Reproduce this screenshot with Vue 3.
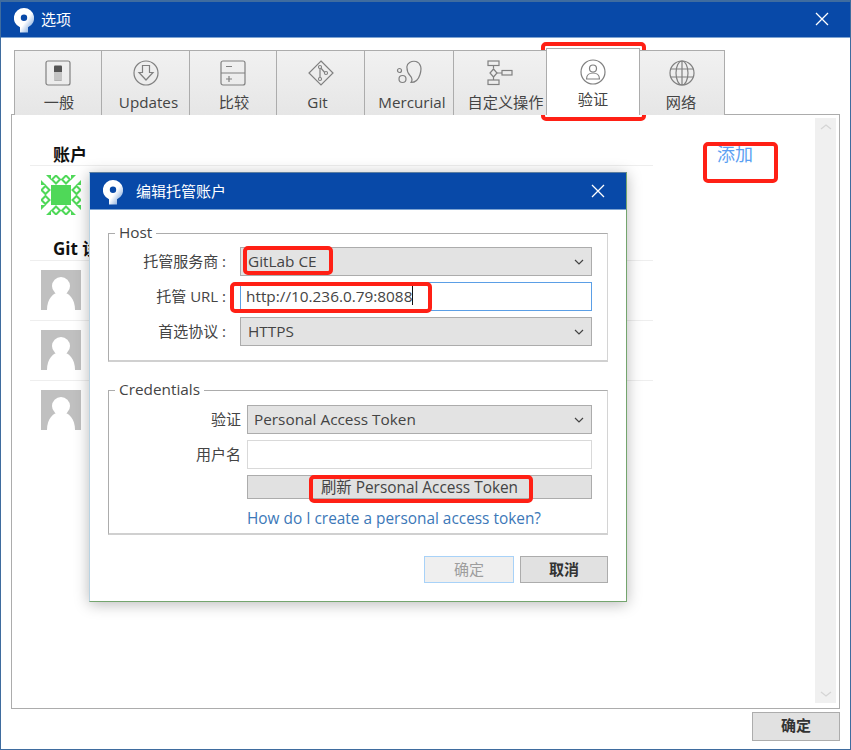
<script setup>
const tabs = [
  { label: '一般', icon: 'general', w: 88, dx: 2 },
  { label: 'Updates', icon: 'updates', w: 89, dx: 6 },
  { label: '比较', icon: 'diff', w: 88, dx: 2 },
  { label: 'Git', icon: 'git', w: 89, dx: -6 },
  { label: 'Mercurial', icon: 'hg', w: 90, dx: 6 },
  { label: '自定义操作', icon: 'custom', w: 94, dx: 11 },
  { label: '验证', icon: 'auth', w: 94, active: true, dx: 0 },
  { label: '网络', icon: 'net', w: 86, dx: -2 }
]
const avatars = [1, 2, 3]
const diamonds = [[15,4.5],[25,4.5],[15,35.5],[25,35.5],[4.5,15],[4.5,25],[35.5,15],[35.5,25]]
const corners = ['', 'translate(40 0) scale(-1 1)', 'translate(0 40) scale(1 -1)', 'translate(40 40) scale(-1 -1)']
</script>

<template>
  <div class="win">
    <header class="title">
      <svg class="logo" viewBox="0 0 20 26" width="20" height="26">
        <defs><linearGradient id="lg" x1="0.2" y1="0.2" x2="0.9" y2="0.8"><stop offset="0.55" stop-color="#fff"/><stop offset="1" stop-color="#8fb2e0"/></linearGradient></defs>
        <path fill="url(#lg)" fill-rule="evenodd" d="M10 0a10 10 0 0 1 4 19.2V24.500H6V19.200A10 10 0 0 1 10 0zm0 6.500a3.200 3.200 0 1 0 0 6.400 3.200 3.200 0 0 0 0-6.400z"/>
      </svg>
      <span class="title-text">选项</span>
      <svg class="close" viewBox="0 0 14 14" width="14" height="14"><path d="M1 1l12 12M13 1L1 13" stroke="#fff" stroke-width="1.3" fill="none"/></svg>
    </header>

    <div class="body">
      <nav class="tabs">
        <div v-for="t in tabs" :key="t.label" class="tab" :class="{ active: t.active }" :style="{ width: t.w + 'px' }">
          <svg class="tab-icon" viewBox="0 0 26 26" width="26" height="26" fill="none" stroke="#808080" stroke-width="1.2">
            <template v-if="t.icon === 'general'">
              <rect x="1" y="1" width="24" height="24" rx="2"/>
              <rect x="9" y="5.500" width="8" height="15" rx="1" fill="#555" stroke="none"/>
              <rect x="9" y="12" width="8" height="8.500" fill="#c4c4c4" stroke="none"/>
            </template>
            <template v-else-if="t.icon === 'updates'">
              <circle cx="13" cy="13" r="12"/>
              <path d="M9.500 5.500h7v7H20l-7 7.500-7-7.500h3.500z"/>
            </template>
            <template v-else-if="t.icon === 'diff'">
              <rect x="1" y="1" width="24" height="24" rx="2"/>
              <path d="M1 13h24M6 6.500h6M6 19h6M9 16v6"/>
            </template>
            <template v-else-if="t.icon === 'git'">
              <path d="M13 1l12 12-12 12L1 13z"/>
              <path d="M12 6v14M12 7l6 7"/>
              <circle cx="12" cy="7" r="1.500" fill="#fff"/><circle cx="18" cy="13" r="1.500" fill="#fff"/><circle cx="12" cy="19" r="1.500" fill="#fff"/>
            </template>
            <template v-else-if="t.icon === 'hg'">
              <path d="M11 8C10 3 16 .5 20 1.500c5 1.500 6 7 4 13-1.500 5-5 8-9 8 2-3 1-5-1-7-1.500-1.500-3-4-3-7.500z"/>
              <circle cx="3.500" cy="10.500" r="2"/><circle cx="6.500" cy="19" r="3.500"/>
            </template>
            <template v-else-if="t.icon === 'custom'">
              <rect x="1" y="1" width="11" height="4.500"/><rect x="1" y="20" width="11" height="4.500"/><rect x="15" y="10.500" width="10" height="4.500"/>
              <path d="M6.500 5.500v3M6.500 17v3M10 13h5"/><path d="M6.500 9l3.500 4-3.500 4L3 13z"/>
            </template>
            <template v-else-if="t.icon === 'auth'">
              <circle cx="13" cy="13" r="12"/><circle cx="13" cy="9.500" r="3.500"/>
              <path d="M6.500 20c0-4 3-6 6.500-6s6.500 2 6.500 6z"/>
            </template>
            <template v-else>
              <circle cx="13" cy="13" r="12"/><ellipse cx="13" cy="13" rx="6" ry="12"/>
              <path d="M1.500 9h23M1.500 17h23M13 1v24"/>
            </template>
          </svg>
          <span class="tab-label" :style="{ marginLeft: t.dx + 'px' }">{{ t.label }}</span>
        </div>
      </nav>

      <section class="panel">
        <div class="list">
          <div class="list-head">
            <h3 class="heading">账户</h3>
            <a class="add">添加</a>
          </div>
          <div class="sep"></div>
          <div class="row first">
            <svg viewBox="0 0 40 40" width="40" height="40" class="ava">
              <rect x="10" y="10" width="20" height="20" fill="#4fd858"/>
              <path v-for="d in diamonds" :key="d.join()" :d="`M${d[0]} ${d[1]-4}l4 4-4 4-4-4z`" fill="none" stroke="#4fd858" stroke-width="2"/>
              <path v-for="c in corners" :key="c" :transform="c" fill="#4fd858" d="M5 0h5v5zM0 5v5h5z"/>
            </svg>
          </div>
          <h3 class="heading git">Git 设置</h3>
          <div class="sep"></div>
          <div v-for="a in avatars" :key="a" class="row user">
            <svg viewBox="0 0 40 40" width="40" height="40" class="ava">
              <rect width="40" height="40" fill="#c0c0c0"/>
              <circle cx="20" cy="16" r="9" fill="#fff"/>
              <path fill="#fff" d="M6 40c0-11 6-18 14-18s14 7 14 18z"/>
            </svg>
          </div>
        </div>
        <div class="scroll">
          <svg viewBox="0 0 12 8" width="12" height="8"><path d="M1 6l5-4 5 4" fill="none" stroke="#d5d5d5" stroke-width="1.300"/></svg>
          <svg viewBox="0 0 12 8" width="12" height="8"><path d="M1 2l5 4 5-4" fill="none" stroke="#d5d5d5" stroke-width="1.300"/></svg>
        </div>
      </section>

      <footer class="foot"><button class="btn ok-main">确定</button></footer>
    </div>

    <div class="dialog">
      <header class="dlg-title">
        <svg class="logo" viewBox="0 0 20 26" width="20" height="26">
          <path fill="url(#lg)" fill-rule="evenodd" d="M10 0a10 10 0 0 1 4 19.2V24.500H6V19.200A10 10 0 0 1 10 0zm0 6.500a3.200 3.200 0 1 0 0 6.400 3.200 3.200 0 0 0 0-6.400z"/>
        </svg>
        <span class="title-text">编辑托管账户</span>
        <svg class="close" viewBox="0 0 14 14" width="14" height="14"><path d="M1 1l12 12M13 1L1 13" stroke="#fff" stroke-width="1.3" fill="none"/></svg>
      </header>
      <div class="dlg-body">
        <fieldset class="group host">
          <legend>Host</legend>
          <div class="frow"><label>托管服务商 :</label><div class="select">GitLab CE<svg class="chev" viewBox="0 0 10 6" width="10" height="6"><path d="M1 1l4 4 4-4" fill="none" stroke="#444" stroke-width="1.200"/></svg></div></div>
          <div class="frow"><label>托管 URL :</label><div class="input focus"><i class="tick"></i>http://10.236.0.79:8088<i class="caret"></i></div></div>
          <div class="frow"><label>首选协议 :</label><div class="select">HTTPS<svg class="chev" viewBox="0 0 10 6" width="10" height="6"><path d="M1 1l4 4 4-4" fill="none" stroke="#444" stroke-width="1.200"/></svg></div></div>
        </fieldset>
        <fieldset class="group cred">
          <legend>Credentials</legend>
          <div class="frow"><label>验证</label><div class="select">Personal Access Token<svg class="chev" viewBox="0 0 10 6" width="10" height="6"><path d="M1 1l4 4 4-4" fill="none" stroke="#444" stroke-width="1.200"/></svg></div></div>
          <div class="frow"><label>用户名</label><div class="input plain"></div></div>
          <div class="frow refresh-row"><label></label><div class="refresh">刷新 Personal Access Token</div></div>
          <div class="frow link-row"><label></label><a class="link">How do I create a personal access token?</a></div>
        </fieldset>
        <div class="dlg-actions">
          <button class="btn disabled">确定</button>
          <button class="btn cancel">取消</button>
        </div>
      </div>
    </div>

    <i class="mark" style="left:540px;top:40px;width:105px;height:79px"></i>
    <i class="mark" style="left:702px;top:140px;width:75px;height:41px"></i>
    <i class="mark" style="left:242px;top:244px;width:90px;height:29px"></i>
    <i class="mark" style="left:229px;top:280px;width:202px;height:31px"></i>
    <i class="mark" style="left:308px;top:473px;width:224px;height:28px"></i>
  </div>
</template>

<style>
html, body { margin: 0; background: #fff; }
</style>

<style scoped>
.win {
  position: relative;
  width: 851px;
  height: 750px;
  box-sizing: border-box;
  border: 1px solid #3f6c9f;
  border-top-width: 2px;
  background: #fff;
  overflow: hidden;
  font-family: "Open Sans", "Noto Sans CJK SC", sans-serif;
  font-size: 15.35px;
  color: #444;
  display: flex;
  flex-direction: column;
}
.title {
  height: 35px;
  background: #0849a8;
  border-bottom: 1px solid #7ea4d2;
  display: flex;
  align-items: center;
  padding-left: 13px;
  flex: none;
}
.logo { flex: none; margin-top: 3px; }
.title-text { color: #fff; margin-left: 7px; font-size: 15px; line-height: 20px; margin-top: -1px; }
.close { margin-left: auto; margin-right: 21px; margin-top: -1px; }
.body { flex: 1; display: flex; flex-direction: column; padding: 12px 10px 8px 10px; min-height: 0; }
.tabs { display: flex; padding-left: 3px; height: 64px; flex: none; position: relative; z-index: 1; }
.tab {
  box-sizing: border-box;
  height: 65px;
  border: 1px solid #acacac;
  border-bottom: none;
  margin-right: -1px;
  background: linear-gradient(#f1f1f1, #e6e6e6);
  display: flex;
  flex-direction: column;
  align-items: center;
  white-space: nowrap;
  padding-top: 9px;
  overflow: hidden;
}
.tab-icon { flex: none; }
.tab-label { margin-top: 6px; font-size: 15.2px; line-height: 20px; color: #444; }
.tab.active {
  background: #fff;
  height: 67px;
  margin-top: -2px;
  padding-top: 10px;
  z-index: 2;
  overflow: visible;
}
.tab.active .tab-label { margin-top: 4px; }
.panel {
  flex: 1;
  border: 1px solid #acacac;
  display: flex;
  padding: 3px 3px 5px 0;
  min-height: 0;
}
.list { flex: 1; padding: 24px 0 0 18px; }
.list-head { display: flex; padding-left: 23px; padding-right: 62px; justify-content: space-between; }
.heading { margin: 0; font-size: 17px; line-height: 25px; color: #111; font-weight: 700; }
.add { color: #5b9ff2; font-size: 18px; line-height: 25px; }
.git { padding-left: 23px; margin-top: 10px; margin-bottom: 1px; line-height: 25px; }
.sep { height: 1px; background: #eee; width: 623px; margin-top: -2px; }
.row { width: 623px; box-sizing: border-box; padding-left: 11px; }
.first { padding-top: 9px; height: 60px; }
.user { height: 60px; padding-top: 9px; border-bottom: 1px solid #eee; }
.user:last-child { border: none; }
.ava { display: block; }
.scroll {
  width: 21px;
  background: #f0f0f0;
  display: flex;
  flex-direction: column;
  justify-content: space-between;
  align-items: center;
  padding: 5px 0;
  box-sizing: border-box;
  flex: none;
}
.foot { display: flex; justify-content: flex-end; padding-top: 3px; flex: none; }
.btn {
  font-family: inherit;
  font-size: 15px;
  box-sizing: border-box;
  background: #e1e1e1;
  border: 1px solid #acacac;
  padding: 0 0 2px;
  color: #333;
}
.ok-main { width: 88px; height: 29px; font-weight: 700; color: #333; padding-bottom: 4px; }

.dialog {
  position: absolute;
  left: 88px;
  top: 170px;
  width: 538px;
  height: 430px;
  box-sizing: border-box;
  background: #fff;
  border: 1px solid #74a56e;
  border-top-color: #5c7ea0;
  border-left-color: #b9d3e2;
  box-shadow: 0 2px 14px rgba(0,0,0,.28);
  display: flex;
  flex-direction: column;
}
.dlg-title {
  flex: none;
  background: #0849a8;
  border-bottom: 1px solid #7ea4d2;
  display: flex;
  align-items: center;
  padding-left: 13px;
  box-sizing: border-box;
  height: 37px;
}
.dlg-title .title-text { margin-left: 13px; margin-top: 0; }
.dlg-title .close { margin-right: 21px; margin-top: 0; }
.dlg-body { padding: 12px 18px 0; flex: 1; display: flex; flex-direction: column; }
.group {
  margin: 0;
  padding: 0;
  border: 1px solid #acacac;
  border-right-color: #d4d4d4;
  border-bottom: 2px solid #d0d0d0;
  box-sizing: border-box;
  width: 500px;
}
.group legend { margin-left: 6px; padding: 0 4px 2px; line-height: 20px; color: #444; }
.host { height: 140px; padding-top: 3px; }
.cred { height: 156px; margin-top: 17px; padding-top: 4px; }
.frow { display: flex; align-items: center; height: 29px; margin-bottom: 6px; }
.frow label { text-align: right; white-space: nowrap; color: #444; font-size: 15px; padding-bottom: 2px; }
.host .frow label { width: 117px; margin-right: 14px; }
.cred .frow label { width: 132px; margin-right: 6px; }
.select, .input, .refresh {
  box-sizing: border-box;
  height: 29px;
  flex: none;
  display: flex;
  align-items: center;
  position: relative;
  white-space: nowrap;
  color: #444;
  padding-bottom: 2px;
}
.select { background: #e3e3e3; border: 1px solid #acacac; padding-left: 6px; }
.host .select { padding-left: 7px; }
.host .select, .host .input { width: 352px; }
.cred .select, .cred .input, .cred .refresh { width: 345px; }
.chev { position: absolute; right: 7px; top: 11px; }
.input { background: #fff; }
.focus { border: 1px solid #5b9fe6; padding-left: 5px; }
.tick { position: absolute; left: -1px; top: 3px; bottom: 3px; width: 1px; background: #5b9fe6; }
.caret { display: inline-block; width: 1px; height: 19px; background: #111; }
.plain { border: 1px solid #d9d9d9; }
.refresh-row { height: 24px; }
.refresh { height: 24px; background: #e1e1e1; border: 1px solid #acacac; justify-content: center; font-size: 15.4px; }
.link-row { height: 20px; margin: 9px 0 0; }
.link { color: #3c78b8; white-space: nowrap; font-size: 15.4px; }
.dlg-actions { display: flex; justify-content: flex-end; gap: 6px; margin-top: 21px; }
.dlg-actions .btn { height: 27px; }
.disabled { width: 90px; background: #efefef; border: 1px solid #a8d2f8; color: #9d9d9d; }
.cancel { width: 88px; font-weight: 700; color: #333; }

.mark {
  position: absolute;
  box-sizing: border-box;
  border: 4px solid #ff2015;
  border-radius: 5px;
  pointer-events: none;
}
</style>
